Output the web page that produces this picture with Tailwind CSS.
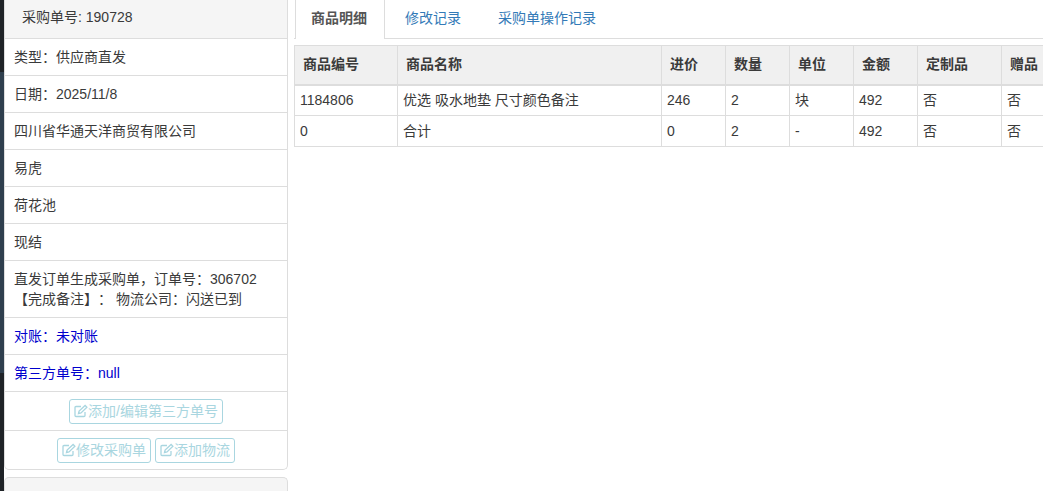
<!DOCTYPE html>
<html lang="zh">
<head>
  <meta charset="UTF-8">
  <title>采购单详情</title>
  <script src="https://cdn.jsdelivr.net/npm/@tailwindcss/browser@4"></script>
</head>
<body class="h-[491px] w-[1043px] overflow-hidden bg-white text-[14px] leading-[20px] text-[#3a3a3a] [text-spacing-trim:space-all] font-['Liberation_Sans','Noto_Sans_CJK_SC',sans-serif]">
  <div class="flex h-[491px] overflow-hidden">
    <!-- 左侧暗条 -->
    <div class="flex w-[4px] shrink-0 flex-col">
      <div class="h-[72px] bg-[#1f2327]"></div>
      <div class="h-[301px] bg-[#2f3f4e]"></div>
      <div class="flex-1 bg-[#1f2327]"></div>
    </div>

    <!-- 采购单信息 -->
    <div class="w-[284px] shrink-0">
      <div class="rounded-b-[5px] border border-t-0 border-[#ddd]">
        <div class="h-[39px] border-b border-[#ddd] bg-[#f5f5f5] pl-[17px] pt-[7px]">采购单号: 190728</div>
        <div class="h-[37px] border-b border-[#ddd] pl-[9px] pt-[8px]">类型：供应商直发</div>
        <div class="h-[37px] border-b border-[#ddd] pl-[9px] pt-[8px]">日期：2025/11/8</div>
        <div class="h-[37px] border-b border-[#ddd] pl-[9px] pt-[8px]">四川省华通天洋商贸有限公司</div>
        <div class="h-[37px] border-b border-[#ddd] pl-[9px] pt-[8px]">易虎</div>
        <div class="h-[37px] border-b border-[#ddd] pl-[9px] pt-[8px]">荷花池</div>
        <div class="h-[37px] border-b border-[#ddd] pl-[9px] pt-[8px]">现结</div>
        <div class="h-[57px] border-b border-[#ddd] pl-[9px] pt-[8px]">直发订单生成采购单，订单号：306702<br>【完成备注】： 物流公司：闪送已到</div>
        <div class="h-[37px] border-b border-[#ddd] pl-[9px] pt-[8px] text-[#0000cd]">对账：未对账</div>
        <div class="h-[37px] border-b border-[#ddd] pl-[9px] pt-[8px] text-[#0000cd]">第三方单号：null</div>
        <div class="flex h-[39px] items-center justify-center border-b border-[#ddd]">
          <button class="flex h-[25px] items-center rounded-[3px] border border-[#a9d6e0] px-[4px] text-[14px] text-[#a9d6e0]">
            <svg class="h-[14px] w-[14px]" viewBox="0 0 14 14" fill="none" stroke="currentColor" stroke-width="1.3"><path d="M11 8v3.5a1 1 0 0 1-1 1H2a1 1 0 0 1-1-1v-8a1 1 0 0 1 1-1h5"/><path d="M4.5 9.5l.6-2.4 6-5.6 1.8 1.8-5.9 5.6z"/></svg>添加/编辑第三方单号
          </button>
        </div>
        <div class="flex h-[38px] items-center justify-center gap-[4px]">
          <button class="flex h-[25px] items-center rounded-[3px] border border-[#a9d6e0] px-[4px] text-[14px] text-[#a9d6e0]">
            <svg class="h-[14px] w-[14px]" viewBox="0 0 14 14" fill="none" stroke="currentColor" stroke-width="1.3"><path d="M11 8v3.5a1 1 0 0 1-1 1H2a1 1 0 0 1-1-1v-8a1 1 0 0 1 1-1h5"/><path d="M4.5 9.5l.6-2.4 6-5.6 1.8 1.8-5.9 5.6z"/></svg>修改采购单
          </button>
          <button class="flex h-[25px] items-center rounded-[3px] border border-[#a9d6e0] px-[4px] text-[14px] text-[#a9d6e0]">
            <svg class="h-[14px] w-[14px]" viewBox="0 0 14 14" fill="none" stroke="currentColor" stroke-width="1.3"><path d="M11 8v3.5a1 1 0 0 1-1 1H2a1 1 0 0 1-1-1v-8a1 1 0 0 1 1-1h5"/><path d="M4.5 9.5l.6-2.4 6-5.6 1.8 1.8-5.9 5.6z"/></svg>添加物流
          </button>
        </div>
      </div>
      <div class="mt-[7px] h-[15px] rounded-t-[5px] border border-b-0 border-[#ddd] bg-[#f5f5f5]"></div>
    </div>

    <!-- 右侧内容 -->
    <div class="ml-[6px] min-w-0 flex-1">
      <div class="flex h-[39px] border-b border-[#ddd] pl-[1px]">
        <div class="h-[39px] w-[90px] border-x border-[#ddd] bg-white pl-[15px] pt-[8px] font-bold text-[#555]">商品明细</div>
        <div class="pl-[20px] pt-[8px] text-[#337ab7]">修改记录</div>
        <div class="pl-[37px] pt-[8px] text-[#337ab7]">采购单操作记录</div>
      </div>
      <table class="mt-[6px] w-[767px] table-fixed border-collapse">
        <thead>
          <tr class="h-[39px] bg-[#f0f0f0] text-left">
            <th class="w-[103px] border border-b-2 border-[#ddd] px-[8px] pb-[2px] font-bold">商品编号</th>
            <th class="w-[264px] border border-b-2 border-[#ddd] px-[8px] pb-[2px] font-bold">商品名称</th>
            <th class="w-[64px] border border-b-2 border-[#ddd] px-[8px] pb-[2px] font-bold">进价</th>
            <th class="w-[64px] border border-b-2 border-[#ddd] px-[8px] pb-[2px] font-bold">数量</th>
            <th class="w-[64px] border border-b-2 border-[#ddd] px-[8px] pb-[2px] font-bold">单位</th>
            <th class="w-[64px] border border-b-2 border-[#ddd] px-[8px] pb-[2px] font-bold">金额</th>
            <th class="w-[84px] border border-b-2 border-[#ddd] px-[8px] pb-[2px] font-bold">定制品</th>
            <th class="w-[60px] border border-b-2 border-[#ddd] px-[8px] pb-[2px] font-bold">赠品</th>
          </tr>
        </thead>
        <tbody>
          <tr class="h-[31px]">
            <td class="border border-[#ddd] px-[5px]">1184806</td>
            <td class="border border-[#ddd] px-[5px]">优选 吸水地垫 尺寸颜色备注</td>
            <td class="border border-[#ddd] px-[5px]">246</td>
            <td class="border border-[#ddd] px-[5px]">2</td>
            <td class="border border-[#ddd] px-[5px]">块</td>
            <td class="border border-[#ddd] px-[5px]">492</td>
            <td class="border border-[#ddd] px-[5px]">否</td>
            <td class="border border-[#ddd] px-[5px]">否</td>
          </tr>
          <tr class="h-[31px]">
            <td class="border border-[#ddd] px-[5px]">0</td>
            <td class="border border-[#ddd] px-[5px]">合计</td>
            <td class="border border-[#ddd] px-[5px]">0</td>
            <td class="border border-[#ddd] px-[5px]">2</td>
            <td class="border border-[#ddd] px-[5px]">-</td>
            <td class="border border-[#ddd] px-[5px]">492</td>
            <td class="border border-[#ddd] px-[5px]">否</td>
            <td class="border border-[#ddd] px-[5px]">否</td>
          </tr>
        </tbody>
      </table>
    </div>
  </div>
</body>
</html>
